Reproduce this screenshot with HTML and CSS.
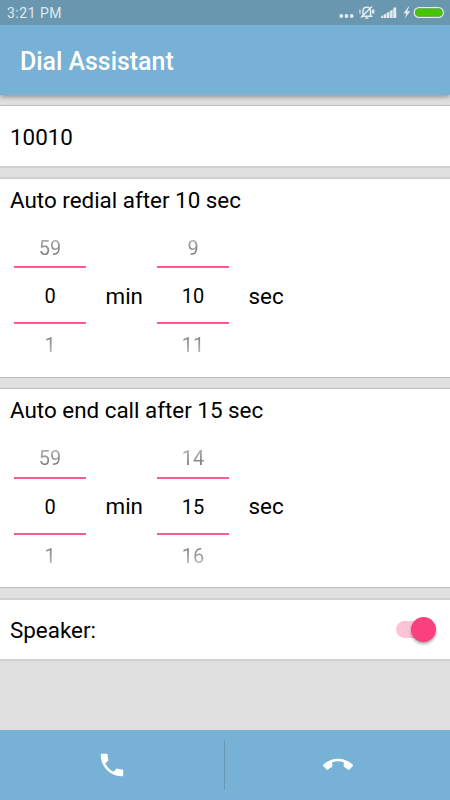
FILE: index.html
```html
<!DOCTYPE html>
<html lang="en">
<head>
<meta charset="utf-8">
<title>Dial Assistant</title>
<link rel="stylesheet" href="styles.css">
</head>
<body>
<div class="status">
  <span class="clock">3:21 PM</span>
  <svg class="status-icons" width="108" height="25" viewBox="0 0 108 25">
    <g fill="#e2ebef">
      <circle cx="3.300" cy="16" r="1.900"/><circle cx="8.500" cy="16" r="1.900"/><circle cx="13.700" cy="16" r="1.900"/>
      <path opacity=".4" d="M43 18v-2L58.200 7.500V18z"/>
      <path d="M43 18v-1.800h2.200V18zM46 18v-3.500h2.200V18zM49 18v-5.500h2.200V18zM52.200 18v-7.500h2.200V18zM55.400 18V7.500h2.800V18z"/>
      <path d="M70.500 6.500l-5 7h3l-1.800 5 5.500-7.200h-3l2-4.800z"/>
    </g>
    <g fill="none" stroke="#e2ebef" stroke-width="1.500">
      <path d="M23.500 16.300H34.500M25 16V10.800c0-4.800 7.500-4.800 7.500 0V16M27.300 18h3M23 17.500L34 6.500"/>
      <path stroke-width="1.200" d="M22 9.500v4M34.500 9.500v4M34.500 10h1.300v3h-1.300"/>
    </g>
    <rect x="76.200" y="7.600" width="29.200" height="9.800" rx="4.900" fill="#43c500" stroke="#e2ebef" stroke-width="1.200"/>
    <rect x="77.200" y="8.600" width="27.200" height="7.800" rx="3.900" fill="none" stroke="#78987f" stroke-width=".6"/>
  </svg>
</div>
<header class="toolbar"><h1>Dial Assistant</h1></header>
<main>
  <section class="card number">10010</section>
  <section class="card timer redial">
    <h2>Auto redial after 10 sec</h2>
    <div class="pickers">
      <div class="picker"><span class="prev">59</span><span class="current">0</span><span class="next">1</span></div>
      <span class="unit">min</span>
      <div class="picker"><span class="prev">9</span><span class="current">10</span><span class="next">11</span></div>
      <span class="unit">sec</span>
    </div>
  </section>
  <section class="card timer end-call">
    <h2>Auto end call after 15 sec</h2>
    <div class="pickers">
      <div class="picker"><span class="prev">59</span><span class="current">0</span><span class="next">1</span></div>
      <span class="unit">min</span>
      <div class="picker"><span class="prev">14</span><span class="current">15</span><span class="next">16</span></div>
      <span class="unit">sec</span>
    </div>
  </section>
  <section class="card speaker">
    <span>Speaker:</span>
    <span class="switch"><span class="thumb"></span></span>
  </section>
</main>
<footer class="actions">
  <div class="action"><svg width="30" height="30" viewBox="0 0 24 24"><path fill="#fff" d="M6.620 10.790c1.440 2.830 3.760 5.140 6.590 6.590l2.200-2.200c.27-.27.67-.36 1.020-.24 1.120.37 2.330.57 3.570.57.55 0 1 .45 1 1V20c0 .55-.45 1-1 1-9.390 0-17-7.610-17-17 0-.55.45-1 1-1h3.500c.55 0 1 .45 1 1 0 1.250.2 2.450.57 3.570.11.35.03.74-.25 1.020l-2.200 2.200z"/></svg></div>
  <div class="divider"></div>
  <div class="action"><svg width="30" height="30" viewBox="0 0 24 24"><path fill="#fff" d="M12 9c-1.600 0-3.150.25-4.600.72v3.100c0 .39-.23.74-.56.9-.98.49-1.870 1.120-2.660 1.850-.18.18-.43.28-.7.28-.28 0-.53-.11-.71-.29L.29 13.080c-.18-.17-.29-.42-.29-.7 0-.28.11-.53.29-.71C3.340 8.780 7.460 7 12 7s8.660 1.780 11.710 4.670c.18.18.29.43.29.71 0 .28-.11.53-.29.710l-2.480 2.480c-.18.18-.43.29-.71.29-.27 0-.52-.11-.7-.28-.79-.74-1.690-1.360-2.670-1.850-.33-.16-.56-.5-.56-.9v-3.100C15.150 9.250 13.600 9 12 9z"/></svg></div>
</footer>
</body>
</html>
```

FILE: styles.css
```css
* { box-sizing: border-box; }
body {
  margin: 0;
  width: 450px;
  height: 800px;
  display: flex;
  flex-direction: column;
  overflow: hidden;
  background: #e0e0e0;
  color: #000;
  font-family: Roboto, sans-serif;
  font-size: 22.4px;
}
h1, h2 { margin: 0; }
.status {
  height: 25px;
  display: flex;
  justify-content: space-between;
  align-items: center;
  padding: 0 4px 0 7px;
  background: #6997b0;
}
.clock { color: #dfe9ee; font-size: 14px; letter-spacing: .5px; line-height: 25px; padding-top: 2px; }
.toolbar {
  height: 70px;
  display: flex;
  align-items: center;
  padding: 2px 20px 0;
  background: #77b1d5;
  box-shadow: 0 2px 5px rgba(0, 0, 0, .35);
  clip-path: inset(0 0 -8px 0);
}
.toolbar h1 { color: #fff; font-size: 24.9px; font-weight: 500; }
main { flex: 1; display: flex; flex-direction: column; padding-top: 10px; }
.card { background: #fff; border: solid #cfcfcf; border-width: 1px 0; }
.number {
  height: 63px;
  display: flex;
  align-items: center;
  padding: 2px 10px 0;
  border-top-color: #bcbcbc;
  border-bottom-width: 2px;
}
.timer h2 { font-size: 22.4px; font-weight: 400; line-height: 26px; }
.redial { height: 201px; margin-top: 9px; padding: 8px 10px 0; border-top-width: 2px; border-bottom-color: #bcbcbc; }
.end-call { height: 200px; margin-top: 10px; padding: 8px 10px 0; border-color: #bcbcbc; }
.pickers { display: flex; align-items: flex-start; padding: 16px 4px 0; }
.end-call .pickers { padding-top: 17px; }
.picker { width: 72px; display: flex; flex-direction: column; align-items: stretch; text-align: center; font-size: 20px; }
.picker span { display: block; }
.prev, .next { line-height: 28px; color: transparent; background-clip: text; -webkit-background-clip: text; }
.prev { height: 37px; background-image: linear-gradient(#bbb 6px, #777 26px); padding-top: 4px; }
.redial .prev { padding-top: 5px; }
.current { height: 58px; line-height: 56px; border: solid #fb5a93; border-width: 2px 0; }
.next { height: 36px; padding-top: 7px; background-image: linear-gradient(#777 10px, #c5c5c5 32px); }
.redial .current { line-height: 57px; }
.unit { line-height: 26px; margin-top: 53px; width: 71px; padding-left: 19.5px; }
.redial .unit { margin-top: 54px; }
.speaker {
  height: 63px;
  margin-top: 10px;
  padding: 0 14px 0 10px;
  display: flex;
  justify-content: space-between;
  align-items: center;
  border-width: 2px 0;
}
.switch { width: 40px; height: 17px; display: flex; align-items: center; justify-content: flex-end; border-radius: 9px; background: linear-gradient(#ffc3d7, #ffc3d7) no-repeat 0 0 / 30px 17px; }
.thumb { width: 25px; height: 25px; flex: none; border-radius: 50%; background: #fb4080; box-shadow: 0 2px 3px rgba(0, 0, 0, .35); }
.actions { height: 70px; display: flex; align-items: center; background: #77b1d5; }
.action { flex: 1; display: flex; justify-content: center; }
.action:first-child { flex: 0 0 224px; }
.divider { width: 1px; height: 50px; background: #6798b6; }
```
